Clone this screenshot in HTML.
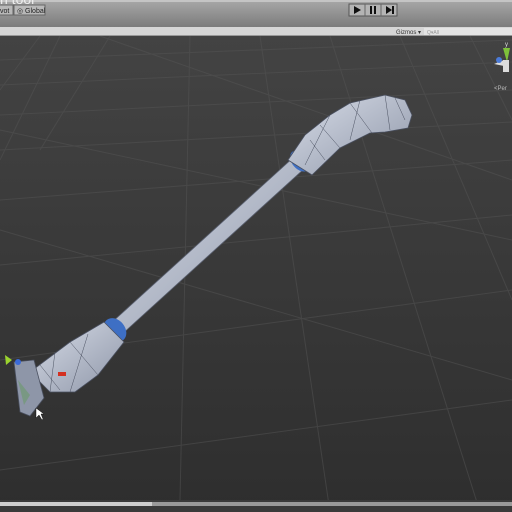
<!DOCTYPE html>
<html><head><style>
html,body{margin:0;padding:0;width:512px;height:512px;overflow:hidden;background:#363636;font-family:"Liberation Sans",sans-serif}
</style></head><body>
<svg width="512" height="512" viewBox="0 0 512 512" xmlns="http://www.w3.org/2000/svg" style="position:absolute;left:0;top:0">
<defs>
<linearGradient id="bg" x1="0" y1="0" x2="0" y2="1"><stop offset="0" stop-color="#434343"/><stop offset="1" stop-color="#2e2e2e"/></linearGradient>
<linearGradient id="tb" x1="0" y1="0" x2="0" y2="1"><stop offset="0" stop-color="#a8a8a8"/><stop offset="1" stop-color="#7c7c7c"/></linearGradient>
<linearGradient id="limb" x1="0" y1="0" x2="1" y2="1"><stop offset="0" stop-color="#d8dde8"/><stop offset="1" stop-color="#8e96a8"/></linearGradient>
</defs>
<rect x="0" y="36" width="512" height="476" fill="url(#bg)"/>
<g stroke="#555" stroke-width="1" opacity="0.5" fill="none">
<path d="M0 60 L512 40 M0 85 L512 62 M0 115 L512 90 M0 150 L512 122 M0 200 L512 160 M0 265 L512 215 M0 360 L512 290 M0 470 L512 400"/>
<path d="M40 36 L0 90 M110 36 L40 150 M190 36 L180 500 M260 36 L330 512 M330 36 L480 512 M400 36 L512 300 M470 36 L512 120 M60 36 L0 160"/>
<path d="M0 130 L512 240 M0 230 L512 380 M100 36 L512 180"/>
</g>
<rect x="0" y="0" width="512" height="27" fill="url(#tb)"/>
<rect x="0" y="0" width="512" height="2" fill="#c4c4c4"/>
<text x="0" y="4" font-size="14" fill="#eee">n tool</text>
<rect x="-2" y="5" width="15" height="10" fill="#b8b8b8" stroke="#666"/>
<text x="0" y="13" font-size="7" fill="#222">vot</text>
<rect x="14" y="5" width="31" height="10" fill="#b8b8b8" stroke="#666"/>
<text x="17" y="13" font-size="7" fill="#222">◎ Global</text>
<rect x="349" y="4" width="48" height="12" fill="#b4b4b4" stroke="#555"/>
<line x1="365" y1="4" x2="365" y2="16" stroke="#666"/><line x1="381" y1="4" x2="381" y2="16" stroke="#666"/>
<path d="M354 6 L361 10 L354 14Z" fill="#111"/>
<rect x="370" y="6" width="2" height="8" fill="#111"/><rect x="374" y="6" width="2" height="8" fill="#111"/>
<path d="M386 6 L392 10 L386 14Z M392 6 h2 v8 h-2z" fill="#111"/>
<rect x="0" y="27" width="512" height="9" fill="#d6d6d6"/>
<rect x="0" y="35" width="512" height="1" fill="#999"/>
<text x="396" y="34" font-size="6" fill="#333">Gizmos ▾</text>
<rect x="424" y="28" width="88" height="7" fill="#e4e4e4"/>
<text x="427" y="34" font-size="5" fill="#999">Q▾All</text>
<path d="M503 48 L510 48 L507 62Z" fill="#7ec23a"/>
<path d="M494 64 L504 60 L504 66Z" fill="#ddd"/>
<rect x="503" y="60" width="6" height="12" fill="#ddd"/>
<circle cx="499" cy="60" r="3" fill="#4a7ad8"/>
<text x="505" y="46" font-size="6" fill="#ddd">y</text>
<text x="494" y="90" font-size="6" fill="#bbb">&lt;Per</text>
<path d="M295 156 L305 168 L120 336 L110 324Z" fill="url(#limb)" stroke="#5a6070" stroke-width="0.8"/>
<ellipse cx="300" cy="161" rx="8" ry="12" fill="#3e6fc4" transform="rotate(-40 300 161)"/>
<ellipse cx="115" cy="330" rx="10" ry="13" fill="#3e6fc4" transform="rotate(-40 115 330)"/>
<path d="M288 160 L305 135 L330 115 L350 103 L385 95 L405 100 L412 115 L408 128 L385 132 L370 133 L340 148 L312 175Z" fill="url(#limb)" stroke="#4a5060" stroke-width="0.8"/>
<g stroke="#4a5060" stroke-width="0.5" fill="none"><path d="M320 125 L340 148 M350 103 L372 133 M385 95 L390 130 M330 115 L305 165 M360 100 L350 140 M395 98 L405 120 M310 140 L325 160"/></g>
<path d="M104 322 L124 342 L98 375 L75 392 L50 392 L30 372 L70 342Z" fill="url(#limb)" stroke="#4a5060" stroke-width="0.8"/>
<g stroke="#4a5060" stroke-width="0.5" fill="none"><path d="M70 342 L98 375 M88 334 L70 392 M55 352 L50 392 M40 365 L60 390"/></g>
<rect x="58" y="372" width="8" height="4" fill="#d43020"/>
<path d="M14 362 L34 360 L44 398 L30 416 L20 412Z" fill="#8e96a8" stroke="#4a5060" stroke-width="0.8"/>
<path d="M18 380 L30 395 L24 405Z" fill="#6a9a6a" opacity="0.6"/>
<path d="M5 355 L12 360 L6 365Z" fill="#9bd42e"/>
<circle cx="18" cy="362" r="3" fill="#3a6ad8"/>
<path d="M36 408 L36 418 L39 415 L42 420 L43 419 L41 414 L44 414Z" fill="#fff" stroke="#000" stroke-width="0.4"/>
<rect x="0" y="500" width="512" height="12" fill="#3a3a3a"/>
<rect x="0" y="502" width="152" height="4" fill="#cfcfcf"/>
<rect x="152" y="502" width="360" height="4" fill="#9a9a9a"/>
</svg>
</body></html>
